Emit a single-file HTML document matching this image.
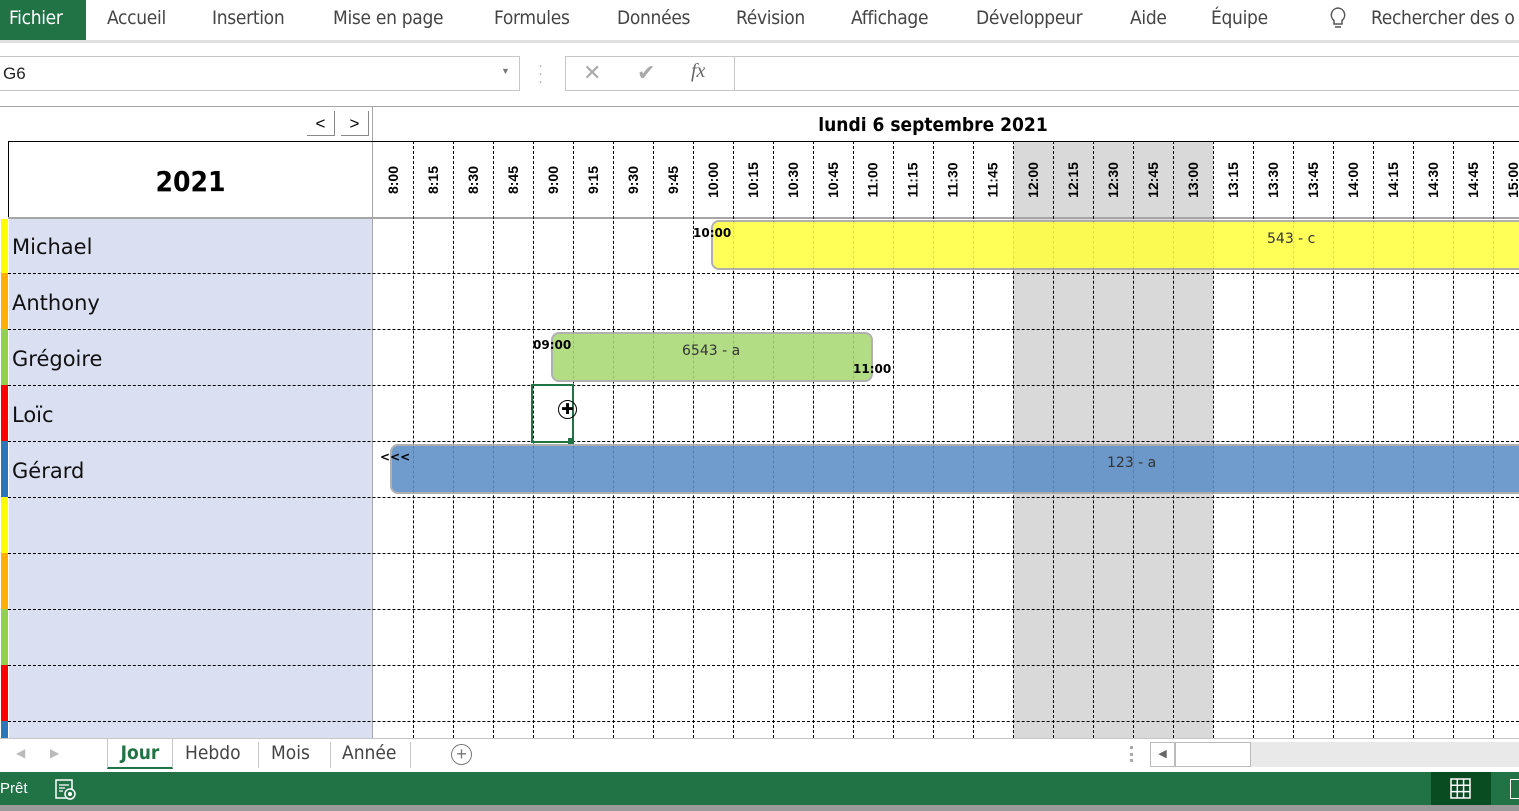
<!DOCTYPE html>
<html><head><meta charset="utf-8"><style>
*{margin:0;padding:0;box-sizing:border-box}
body{width:1519px;height:811px;overflow:hidden;background:#fff;font-family:"Liberation Sans",sans-serif;position:relative}
.a{position:absolute}
.menu{top:7px;font-size:19px;color:#444;font-family:"DejaVu Sans Condensed","Liberation Sans",sans-serif;letter-spacing:-0.3px}
.v{position:absolute;top:141px;height:597px;width:0;border-left:1px dashed #000}
.h{position:absolute;left:8px;width:1511px;height:0;border-top:1px dashed #000}
.t{position:absolute;top:150px;width:40px;height:60px;font-weight:bold;font-size:14px;display:flex;align-items:center;justify-content:center}
.t span{transform:rotate(-90deg);white-space:nowrap}
.nm{position:absolute;left:12px;font-size:21px;color:#111;font-family:"DejaVu Sans","Liberation Sans",sans-serif}
.st{position:absolute;left:1px;width:7px;height:56px}
.bar{position:absolute;border:2px solid #a6a6a6;border-radius:8px;opacity:.88}
.lbl{position:absolute;font-size:12px;font-weight:bold;font-family:"DejaVu Sans","Liberation Sans",sans-serif}
</style></head><body>
<div class="a" style="left:0;top:0;width:86px;height:40px;background:#217346"></div>
<div class="a menu" style="left:9px;color:#fff">Fichier</div>
<div class="a menu" style="left:107px">Accueil</div>
<div class="a menu" style="left:212px">Insertion</div>
<div class="a menu" style="left:333px">Mise en page</div>
<div class="a menu" style="left:494px">Formules</div>
<div class="a menu" style="left:617px">Données</div>
<div class="a menu" style="left:736px">Révision</div>
<div class="a menu" style="left:851px">Affichage</div>
<div class="a menu" style="left:976px">Développeur</div>
<div class="a menu" style="left:1130px">Aide</div>
<div class="a menu" style="left:1211px">Équipe</div>
<svg class="a" style="left:1328px;top:6px" width="20" height="26"><path d="M10 2a7 7 0 0 0-4 12.5V18h8v-3.5A7 7 0 0 0 10 2z M7 21h6" fill="none" stroke="#555" stroke-width="1.5"/></svg>
<div class="a menu" style="left:1371px">Rechercher des o</div>
<div class="a" style="left:0;top:40px;width:1519px;height:3px;background:#e1e1e1"></div>
<div class="a" style="left:0;top:56px;width:520px;height:35px;border:1px solid #c6c6c6;border-left:none"></div>
<div class="a" style="left:3px;top:64px;font-size:17px;color:#222">G6</div>
<div class="a" style="left:501px;top:66px;font-size:9px;color:#777">▼</div>
<div class="a" style="left:538px;top:62px;font-size:15px;color:#aaa;line-height:8px">·<br>·<br>·</div>
<div class="a" style="left:565px;top:56px;width:170px;height:35px;border:1px solid #c6c6c6"></div>
<div class="a" style="left:583px;top:60px;font-size:22px;color:#aaa">✕</div>
<div class="a" style="left:637px;top:60px;font-size:22px;color:#aaa">✔</div>
<div class="a" style="left:691px;top:60px;font-size:20px;color:#666;font-style:italic;font-family:'Liberation Serif',serif">fx</div>
<div class="a" style="left:734px;top:56px;width:800px;height:35px;border:1px solid #c6c6c6"></div>
<div class="a" style="left:0;top:106px;width:1519px;height:1px;background:#a6a6a6"></div>
<div class="a" style="left:307px;top:111px;width:28px;height:25px;border-right:1px solid #888;border-bottom:1px solid #888;font-size:17px;text-align:center;line-height:25px">&lt;</div>
<div class="a" style="left:341px;top:111px;width:28px;height:25px;border-right:1px solid #888;border-bottom:1px solid #888;font-size:17px;text-align:center;line-height:25px">&gt;</div>
<div class="a" style="left:372px;top:107px;width:1px;height:631px;background:#a6a6a6"></div>
<div class="a" style="left:373px;top:114px;width:1120px;text-align:center;font-weight:bold;font-size:19px;font-family:'DejaVu Sans Condensed','Liberation Sans',sans-serif">lundi 6 septembre 2021</div>
<div class="a" style="left:8px;top:141px;width:1511px;height:1px;background:#000"></div>
<div class="a" style="left:8px;top:141px;width:1px;height:76px;background:#000"></div>
<div class="a" style="left:9px;top:165px;width:363px;text-align:center;font-weight:bold;font-size:28px;font-family:'DejaVu Sans Condensed','Liberation Sans',sans-serif">2021</div>
<div class="a" style="left:1013px;top:142px;width:200px;height:596px;background:#d9d9d9"></div>
<div class="a" style="left:9px;top:217px;width:363px;height:521px;background:#dae0f2"></div>
<div class="a" style="left:8px;top:217px;width:1511px;height:2px;background:#a6a6a6"></div>
<div class="st" style="top:219px;background:#ffff00"></div>
<div class="st" style="top:273px;background:#ffb000"></div>
<div class="st" style="top:329px;background:#92d050"></div>
<div class="st" style="top:385px;background:#ff0000"></div>
<div class="st" style="top:441px;background:#2e75b6"></div>
<div class="st" style="top:497px;background:#ffff00"></div>
<div class="st" style="top:553px;background:#ffb000"></div>
<div class="st" style="top:609px;background:#92d050"></div>
<div class="st" style="top:665px;background:#ff0000"></div>
<div class="st" style="top:721px;height:17px;background:#2e75b6"></div>
<div class="nm" style="top:235px">Michael</div>
<div class="nm" style="top:291px">Anthony</div>
<div class="nm" style="top:347px">Grégoire</div>
<div class="nm" style="top:403px">Loïc</div>
<div class="nm" style="top:459px">Gérard</div>
<div class="h" style="top:273px"></div><div class="h" style="top:329px"></div><div class="h" style="top:385px"></div><div class="h" style="top:441px"></div><div class="h" style="top:497px"></div><div class="h" style="top:553px"></div><div class="h" style="top:609px"></div><div class="h" style="top:665px"></div><div class="h" style="top:721px"></div>
<div class="v" style="left:413px"></div><div class="v" style="left:453px"></div><div class="v" style="left:493px"></div><div class="v" style="left:533px"></div><div class="v" style="left:573px"></div><div class="v" style="left:613px"></div><div class="v" style="left:653px"></div><div class="v" style="left:693px"></div><div class="v" style="left:733px"></div><div class="v" style="left:773px"></div><div class="v" style="left:813px"></div><div class="v" style="left:853px"></div><div class="v" style="left:893px"></div><div class="v" style="left:933px"></div><div class="v" style="left:973px"></div><div class="v" style="left:1013px"></div><div class="v" style="left:1053px"></div><div class="v" style="left:1093px"></div><div class="v" style="left:1133px"></div><div class="v" style="left:1173px"></div><div class="v" style="left:1213px"></div><div class="v" style="left:1253px"></div><div class="v" style="left:1293px"></div><div class="v" style="left:1333px"></div><div class="v" style="left:1373px"></div><div class="v" style="left:1413px"></div><div class="v" style="left:1453px"></div><div class="v" style="left:1493px"></div>
<div class="t" style="left:373px"><span>8:00</span></div><div class="t" style="left:413px"><span>8:15</span></div><div class="t" style="left:453px"><span>8:30</span></div><div class="t" style="left:493px"><span>8:45</span></div><div class="t" style="left:533px"><span>9:00</span></div><div class="t" style="left:573px"><span>9:15</span></div><div class="t" style="left:613px"><span>9:30</span></div><div class="t" style="left:653px"><span>9:45</span></div><div class="t" style="left:693px"><span>10:00</span></div><div class="t" style="left:733px"><span>10:15</span></div><div class="t" style="left:773px"><span>10:30</span></div><div class="t" style="left:813px"><span>10:45</span></div><div class="t" style="left:853px"><span>11:00</span></div><div class="t" style="left:893px"><span>11:15</span></div><div class="t" style="left:933px"><span>11:30</span></div><div class="t" style="left:973px"><span>11:45</span></div><div class="t" style="left:1013px"><span>12:00</span></div><div class="t" style="left:1053px"><span>12:15</span></div><div class="t" style="left:1093px"><span>12:30</span></div><div class="t" style="left:1133px"><span>12:45</span></div><div class="t" style="left:1173px"><span>13:00</span></div><div class="t" style="left:1213px"><span>13:15</span></div><div class="t" style="left:1253px"><span>13:30</span></div><div class="t" style="left:1293px"><span>13:45</span></div><div class="t" style="left:1333px"><span>14:00</span></div><div class="t" style="left:1373px"><span>14:15</span></div><div class="t" style="left:1413px"><span>14:30</span></div><div class="t" style="left:1453px"><span>14:45</span></div><div class="t" style="left:1493px"><span>15:00</span></div>
<div class="bar" style="left:711px;top:220px;width:830px;height:50px;background:#ffff40"></div>
<div class="a" style="left:1267px;top:231px;font-size:14px;color:#333;font-family:'DejaVu Sans','Liberation Sans',sans-serif">543 - c</div>
<div class="lbl" style="left:693px;top:226px">10:00</div>
<div class="bar" style="left:551px;top:332px;width:322px;height:50px;background:#a9d975"></div>
<div class="a" style="left:682px;top:343px;font-size:14px;color:#333;font-family:'DejaVu Sans','Liberation Sans',sans-serif">6543 - a</div>
<div class="lbl" style="left:533px;top:338px">09:00</div>
<div class="lbl" style="left:853px;top:362px">11:00</div>
<div class="bar" style="left:390px;top:444px;width:1150px;height:50px;background:#5c8fc7"></div>
<div class="a" style="left:1107px;top:455px;font-size:14px;color:#333;font-family:'DejaVu Sans','Liberation Sans',sans-serif">123 - a</div>
<div class="lbl" style="left:380px;top:450px">&lt;&lt;&lt;</div>
<div class="a" style="left:531px;top:384px;width:43px;height:59px;border:2px solid #217346"></div>
<div class="a" style="left:568px;top:438px;width:6px;height:6px;background:#217346"></div>
<div class="a" style="left:558px;top:400px;width:19px;height:19px;border:1px solid #000;border-radius:50%;font-size:15px;line-height:17px;text-align:center">✚</div>
<div class="a" style="left:0;top:738px;width:1519px;height:34px;background:#fff;border-top:1px solid #c6c6c6"></div>
<div class="a" style="left:16px;top:746px;font-size:12px;color:#bbb">◀</div>
<div class="a" style="left:50px;top:746px;font-size:12px;color:#bbb">▶</div>
<div class="a" style="left:107px;top:738px;width:66px;height:31px;border-bottom:2px solid #217346;border-left:1px solid #c6c6c6;border-right:1px solid #c6c6c6;font-weight:bold;color:#217346;font-size:19px;text-align:center;line-height:31px;font-family:'DejaVu Sans Condensed','Liberation Sans',sans-serif">Jour</div>
<div class="a" style="left:185px;top:742px;font-size:19px;color:#444;font-family:'DejaVu Sans Condensed','Liberation Sans',sans-serif">Hebdo</div>
<div class="a" style="left:258px;top:742px;width:1px;height:26px;background:#c6c6c6"></div>
<div class="a" style="left:271px;top:742px;font-size:19px;color:#444;font-family:'DejaVu Sans Condensed','Liberation Sans',sans-serif">Mois</div>
<div class="a" style="left:330px;top:742px;width:1px;height:26px;background:#c6c6c6"></div>
<div class="a" style="left:342px;top:742px;font-size:19px;color:#444;font-family:'DejaVu Sans Condensed','Liberation Sans',sans-serif">Année</div>
<div class="a" style="left:410px;top:742px;width:1px;height:26px;background:#c6c6c6"></div>
<div class="a" style="left:451px;top:744px;width:21px;height:21px;border:1.5px solid #777;border-radius:50%;color:#777;font-size:18px;line-height:18px;text-align:center">+</div>
<div class="a" style="left:1130px;top:746px;width:3px;height:16px;border-left:3px dotted #aaa"></div>
<div class="a" style="left:1150px;top:742px;width:369px;height:25px;background:#e9e9e9"></div>
<div class="a" style="left:1150px;top:742px;width:25px;height:25px;border:1px solid #bbb;background:#fff;font-size:11px;color:#666;text-align:center;line-height:23px">◀</div>
<div class="a" style="left:1175px;top:742px;width:76px;height:25px;border:1px solid #bbb;background:#fff"></div>
<div class="a" style="left:0;top:772px;width:1519px;height:33px;background:#217346"></div>
<div class="a" style="left:0;top:780px;font-size:15px;color:#fff">Prêt</div>
<svg class="a" style="left:55px;top:779px" width="22" height="22"><rect x="1" y="1" width="16" height="18" fill="none" stroke="#fff" stroke-width="1.5"/><path d="M4 6h10M4 9h6M4 12h4" stroke="#fff" stroke-width="1.3"/><circle cx="15" cy="15" r="5" fill="#217346" stroke="#fff" stroke-width="1.5"/><circle cx="15" cy="15" r="2" fill="#fff"/></svg>
<div class="a" style="left:1431px;top:772px;width:60px;height:33px;background:#0a4c22"></div>
<svg class="a" style="left:1450px;top:778px" width="21" height="21"><rect x="1" y="1" width="19" height="19" fill="none" stroke="#fff" stroke-width="1.5"/><path d="M7.3 1v19M13.6 1v19M1 7.3h19M1 13.6h19" stroke="#fff" stroke-width="1.5"/></svg>
<div class="a" style="left:1510px;top:779px;width:12px;height:20px;border:1.5px solid #fff"></div>
<div class="a" style="left:0;top:805px;width:1519px;height:6px;background:#9a9a9a"></div>
</body></html>
